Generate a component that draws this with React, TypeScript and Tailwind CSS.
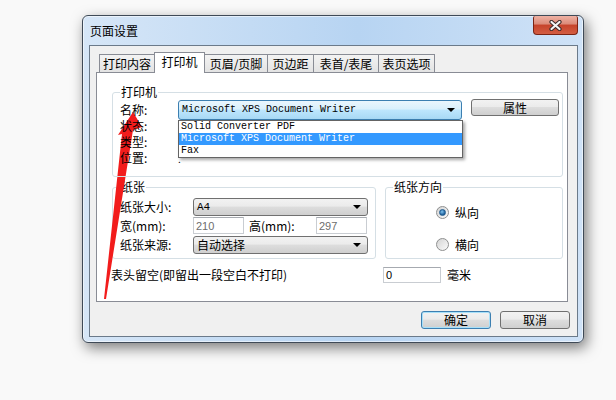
import type { ReactNode } from "react"

const TABS = [
  { label: "打印内容", w: "w-[56px]" },
  { label: "打印机", w: "w-[51px]", active: true },
  { label: "页眉/页脚", w: "w-[64px]" },
  { label: "页边距", w: "w-[47px]" },
  { label: "表首/表尾", w: "w-[66px]" },
  { label: "表页选项", w: "w-[57px]" },
]

const PRINTERS = ["Solid Converter PDF", "Microsoft XPS Document Writer", "Fax"]

const DropArrow = () => (
  <svg width="8" height="4" viewBox="0 0 8 4" className="shrink-0">
    <path d="M0 0h8L4 4z" fill="#000" />
  </svg>
)

const Combo = ({ className, focused, children }: { className: string; focused?: boolean; children: ReactNode }) => (
  <div
    className={`flex items-center justify-between rounded-[3px] border pl-[3px] pr-[6px] ${
      focused
        ? "border-[#3c7fb1] bg-[linear-gradient(#eaf6fd,#d9f0fc_45%,#bee6fd_50%,#a7d9f5)]"
        : "border-[#707070] bg-[linear-gradient(#f2f2f2,#ebebeb_45%,#dddddd_50%,#cfcfcf)]"
    } ${className}`}
  >
    <span className="whitespace-nowrap">{children}</span>
    <DropArrow />
  </div>
)

const Button = ({ className, children }: { className: string; children: ReactNode }) => (
  <div
    className={`flex items-center justify-center rounded-[3px] border bg-[linear-gradient(#f2f2f2,#ebebeb_45%,#dddddd_50%,#cfcfcf)] ${className}`}
  >
    {children}
  </div>
)

const TextBox = ({ className, children }: { className: string; children: ReactNode }) => (
  <div
    className={`flex items-center border border-[#c9cdd2] border-t-[#a6aab0] bg-white pl-[2px] text-[11px] [font-family:'Liberation_Sans',sans-serif] ${className}`}
  >
    {children}
  </div>
)

const Group = ({ title, className, children }: { title: string; className: string; children: ReactNode }) => (
  <div className={`relative rounded-[3px] border border-[#d5dfe5] ${className}`}>
    <span className="absolute -top-[8px] left-[7px] bg-white px-[1px] leading-[14px]">{title}</span>
    {children}
  </div>
)

const Radio = ({ checked, label }: { checked?: boolean; label: string }) => (
  <div className="flex h-[13px] items-center gap-[6px]">
    <div className="flex h-[13px] w-[13px] items-center justify-center rounded-full border border-[#8e8f8f] bg-[linear-gradient(135deg,#d4d4d4,#fbfbfb)]">
      {checked && (
        <div className="h-[7px] w-[7px] rounded-full border border-[#1d5a8e] bg-[radial-gradient(circle_at_40%_35%,#7ec3f0,#1c5d98_70%)]" />
      )}
    </div>
    <span className="leading-[14px]">{label}</span>
  </div>
)

export default function App() {
  return (
    <div className="relative h-[400px] w-[616px] overflow-hidden bg-[#f9f9f9] pl-[82px] pt-[15px] text-[12px] leading-[14px] text-black [font-family:'Noto_Sans_CJK_SC',sans-serif]">
      {/* window */}
      <div className="h-[328px] w-[502px] rounded-[6px] border border-[#3f4a57] bg-[linear-gradient(90deg,#d6e6f7,#b7d4f2_55%,#cfe2f7)] shadow-[inset_0_0_0_1px_rgba(255,255,255,0.55),3px_5px_14px_rgba(0,0,0,0.5)]">
        <div className="flex h-[29px] items-start justify-between pl-[7px] pr-[5px]">
          <span className="mt-[8px]">页面设置</span>
          <div className="flex h-[19px] w-[45px] items-center justify-center rounded-b-[4px] rounded-t-[2px] border border-[#7a2414] border-t-0 bg-[linear-gradient(#eeb1a3,#dc8a78_45%,#c6432b_50%,#d35d42)]">
            <svg width="13" height="11" viewBox="0 0 13 11">
              <path d="M2.5 2L10.5 9M10.5 2L2.5 9" stroke="#3a2a28" strokeWidth="4.2" strokeLinecap="round" />
              <path d="M2.5 2L10.5 9M10.5 2L2.5 9" stroke="#f4f4f4" strokeWidth="2.2" strokeLinecap="round" />
            </svg>
          </div>
        </div>

        {/* client area */}
        <div className="ml-[6px] flex h-[292px] w-[489px] flex-col border border-[#6b7a8a] bg-[#f0f0f0] pl-[6px] pt-[6px]">
          <div className="flex h-[20px] items-end pl-[3px]">
            {TABS.map((t, i) =>
              t.active ? (
                <div
                  key={t.label}
                  className={`relative z-10 -mb-px -ml-px flex h-[21px] items-center justify-center border border-b-0 border-[#898c95] bg-white pb-[2px] ${t.w}`}
                >
                  {t.label}
                </div>
              ) : (
                <div
                  key={t.label}
                  className={`flex h-[18px] items-center justify-center border border-b-0 border-[#898c95] bg-[linear-gradient(#f3f3f3,#e3e3e3)] ${i > 0 ? "-ml-px" : ""} ${t.w}`}
                >
                  {t.label}
                </div>
              )
            )}
          </div>

          <div className="flex h-[230px] w-[472px] flex-col border border-[#898c95] bg-white pl-[15px] pt-[19px]">
            <Group title="打印机" className="z-10 h-[85px] w-[451px]">
              <div className="flex items-start pl-[7px] pt-[7px]">
                <div className="flex w-[58px] flex-col pt-[2px]">
                  {["名称:", "状态:", "类型:", "位置:"].map((t) => (
                    <div key={t} className="h-[16px] leading-[16px]">
                      {t}
                    </div>
                  ))}
                </div>
                <div className="relative h-[20px]">
                  <Combo focused className="h-[20px] w-[284px] text-[10px] [font-family:'Liberation_Mono',monospace]">
                    Microsoft XPS Document Writer
                  </Combo>
                  <div className="absolute left-0 top-full z-20 w-[285px] border border-[#646464] bg-white text-[10px] leading-[12px] shadow-[2px_2px_3px_rgba(0,0,0,0.35)] [font-family:'Liberation_Mono',monospace]">
                    {PRINTERS.map((p, i) => (
                      <div key={p} className={`h-[12px] pl-[2px] ${i === 1 ? "bg-[#3399ff] text-white" : ""}`}>
                        {p}
                      </div>
                    ))}
                  </div>
                  <div className="absolute left-[0px] top-[54px] text-[10px] leading-[10px]">.</div>
                </div>
                <Button className="-mt-px ml-[9px] h-[17px] w-[88px] border-[#707070]">属性</Button>
              </div>
            </Group>

            <div className="mt-[10px] flex gap-[9px]">
              <Group title="纸张" className="h-[72px] w-[264px]">
                <div className="flex flex-col gap-[1px] pl-[7px] pt-[10px]">
                  <div className="flex h-[18px] items-center">
                    <span className="w-[73px]">纸张大小:</span>
                    <Combo className="h-[18px] w-[175px] text-[11px] [font-family:'Liberation_Mono',monospace]">A4</Combo>
                  </div>
                  <div className="flex h-[17px] items-center">
                    <span className="w-[73px]">宽(mm):</span>
                    <TextBox className="h-[17px] w-[51px] text-[#6d6d6d]">210</TextBox>
                    <span className="ml-[5px] w-[67px]">高(mm):</span>
                    <TextBox className="h-[17px] w-[51px] text-[#6d6d6d]">297</TextBox>
                  </div>
                  <div className="mt-[1px] flex h-[18px] items-center">
                    <span className="w-[73px]">纸张来源:</span>
                    <Combo className="h-[18px] w-[175px]">自动选择</Combo>
                  </div>
                </div>
              </Group>
              <Group title="纸张方向" className="h-[72px] w-[178px]">
                <div className="flex flex-col gap-[19px] pl-[50px] pt-[18px]">
                  <Radio checked label="纵向" />
                  <Radio label="横向" />
                </div>
              </Group>
            </div>

            <div className="mt-[8px] flex h-[16px] items-center">
              <span className="-ml-px w-[272px]">表头留空(即留出一段空白不打印)</span>
              <TextBox className="h-[16px] w-[58px]">0</TextBox>
              <span className="ml-[6px]">毫米</span>
            </div>
          </div>

          <div className="mt-[9px] flex justify-end gap-[9px] pr-[7px]">
            <Button className="h-[18px] w-[70px] border-[#3c7fb1] shadow-[inset_0_0_0_1px_#a7e0f9]">确定</Button>
            <Button className="h-[18px] w-[70px] border-[#707070]">取消</Button>
          </div>
        </div>
      </div>

      {/* red annotation arrow */}
      <svg className="pointer-events-none absolute left-0 top-0" width="616" height="400" viewBox="0 0 616 400">
        <polygon points="133,112 142,127 133,130 106,299 104,299 122,134 118,135" fill="#f21c1c" />
      </svg>
    </div>
  )
}
